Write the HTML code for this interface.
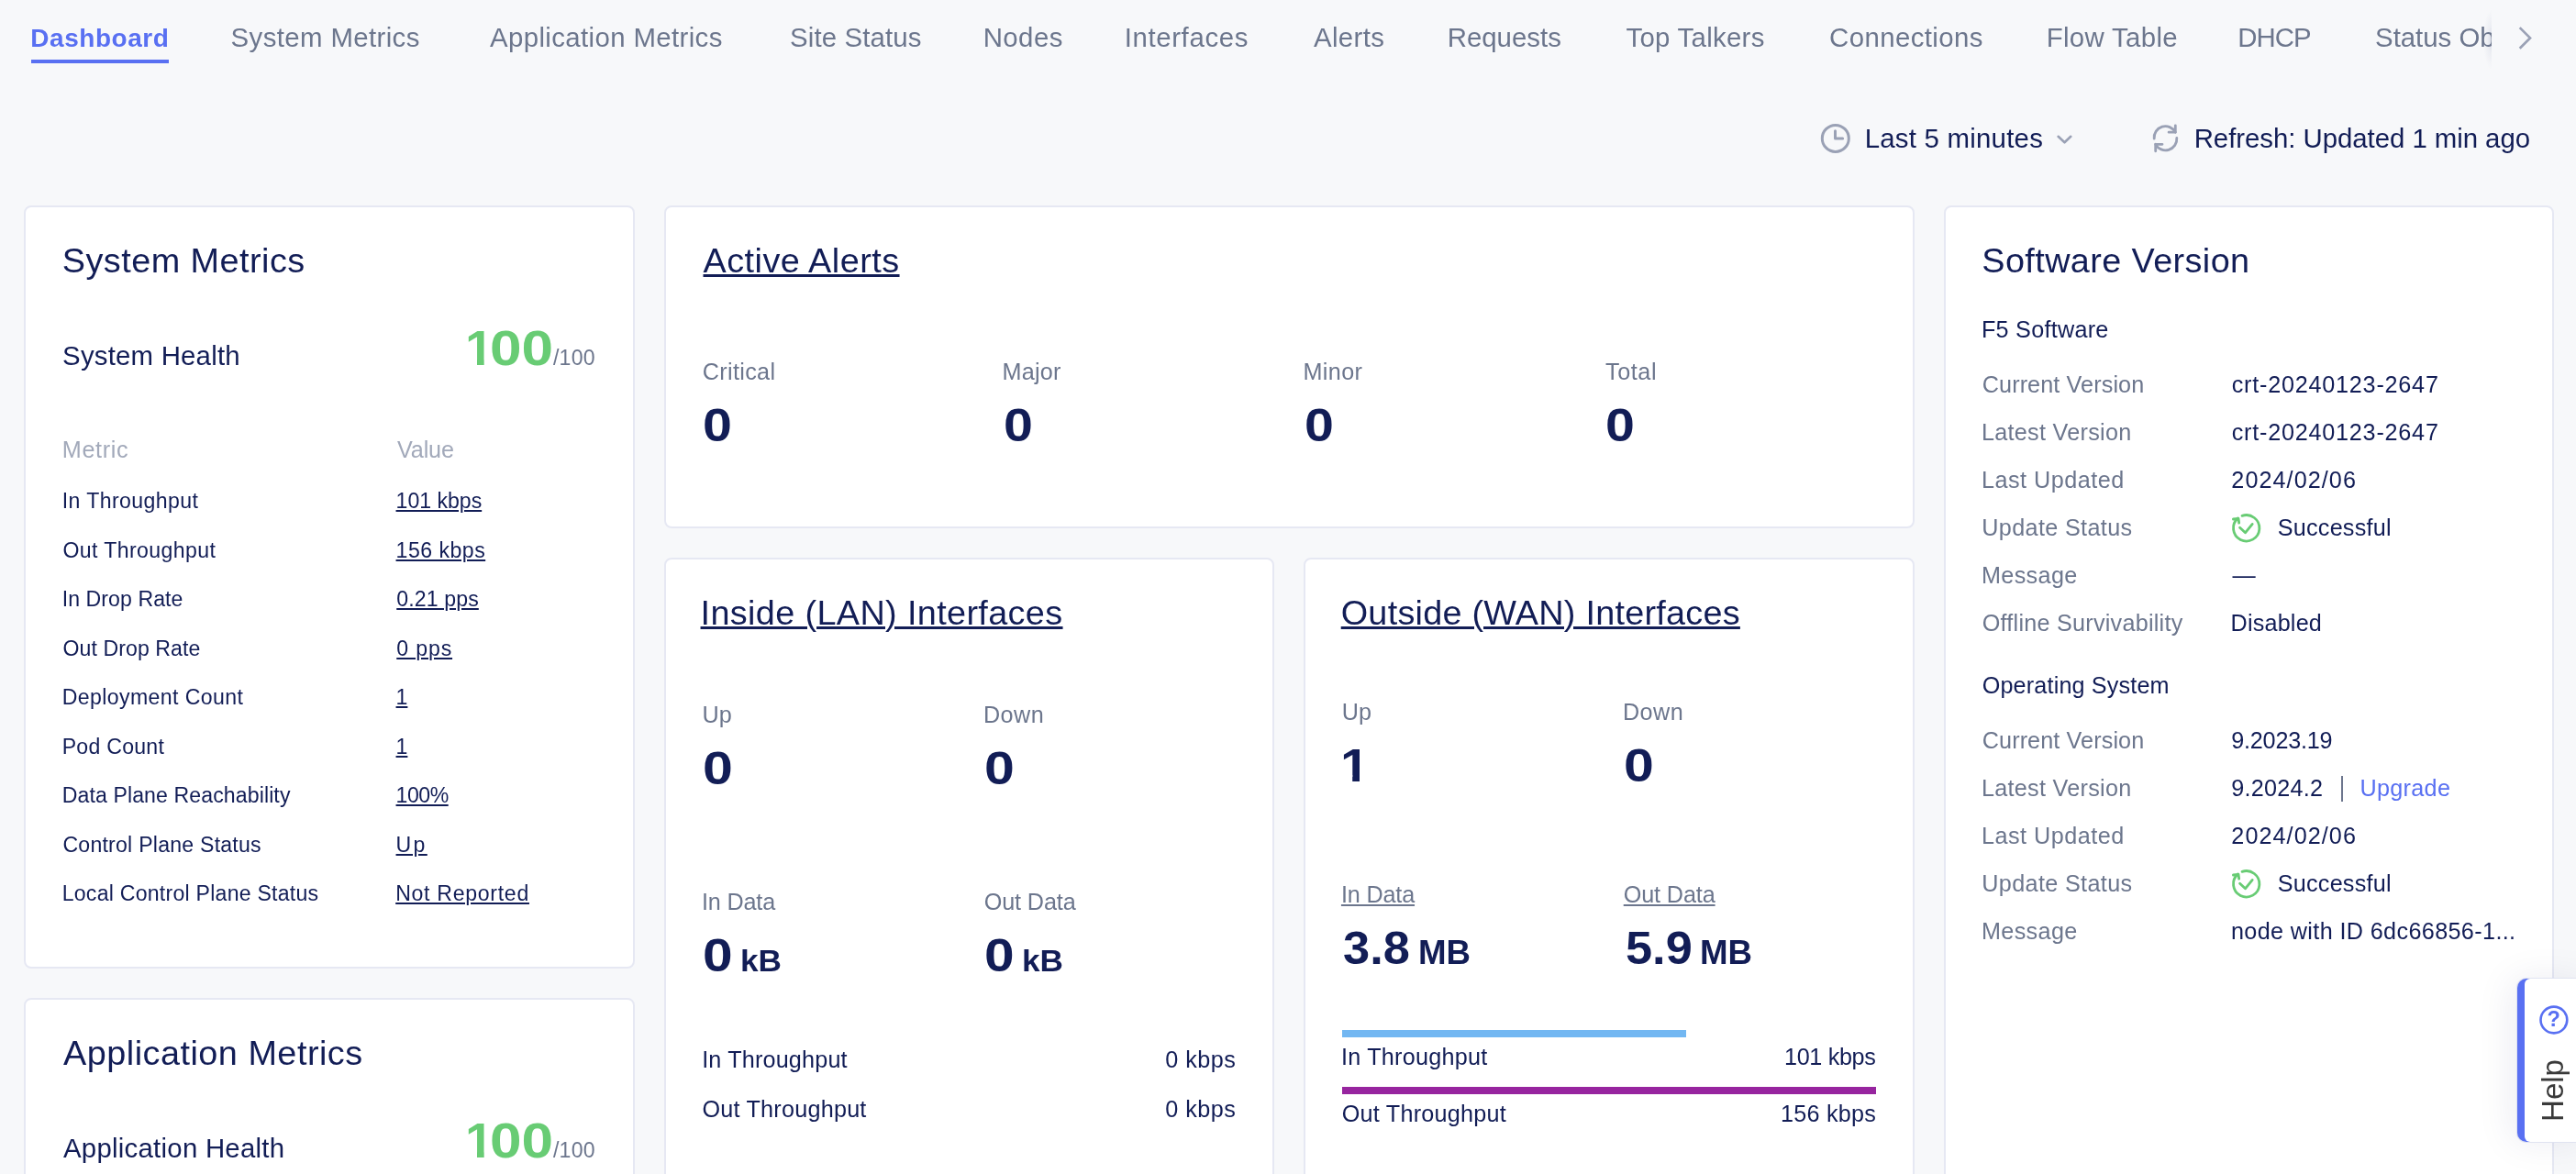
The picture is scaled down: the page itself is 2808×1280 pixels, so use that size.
<!DOCTYPE html>
<html lang="en">
<head>
<meta charset="utf-8">
<title>Dashboard</title>
<style>
html,body{margin:0;padding:0;}
body{width:2808px;height:1280px;overflow:hidden;position:relative;background:#f7f8fa;font-family:"Liberation Sans",sans-serif;color:#121d56;}
.card{position:absolute;box-sizing:border-box;background:#fff;border:2px solid #e6e8f3;border-radius:8px;}
.t{position:absolute;white-space:nowrap;line-height:1;}
.u{text-decoration:underline;text-decoration-thickness:2px;text-underline-offset:2px;}
.u3{text-decoration-thickness:3px;}
.bar{position:absolute;height:8px;}
svg{position:absolute;overflow:visible;}
</style>
</head>
<body>
<!-- cards -->
<div class="card" style="left:26px;top:224px;width:666px;height:832px;"></div>
<div class="card" style="left:26px;top:1088px;width:666px;height:300px;"></div>
<div class="card" style="left:724px;top:224px;width:1363px;height:352px;"></div>
<div class="card" style="left:724px;top:608px;width:665px;height:760px;"></div>
<div class="card" style="left:1421px;top:608px;width:666px;height:760px;"></div>
<div class="card" style="left:2119px;top:224px;width:665px;height:1200px;"></div>

<!-- active tab underline -->
<div style="position:absolute;left:34px;top:65px;width:150px;height:4px;background:#5970f2;"></div>
<div style="position:absolute;left:2707px;top:10px;width:9px;height:66px;background:radial-gradient(ellipse 100% 50% at 100% 50%,rgba(170,176,200,.42) 0%,rgba(170,176,200,.14) 45%,rgba(170,176,200,0) 100%);"></div>
<svg style="left:2740px;top:24px;" width="28" height="36" viewBox="0 0 28 36"><path d="M6.7 6.1 L18 17.4 L6.7 28.8" fill="none" stroke="#9aa1b5" stroke-width="2.7" stroke-linecap="butt" stroke-linejoin="miter"/></svg>

<!-- clock icon -->
<svg style="left:1984px;top:134px;" width="34" height="34" viewBox="0 0 34 34"><circle cx="16.8" cy="16.9" r="14.5" fill="none" stroke="#9aa1b5" stroke-width="3"/><path d="M16.5 8.8 V16.9 H24.6" fill="none" stroke="#9aa1b5" stroke-width="3" stroke-linecap="round" stroke-linejoin="round"/></svg>
<!-- chevron -->
<svg style="left:2241px;top:145px;" width="20" height="14" viewBox="0 0 20 14"><path d="M2.6 3.8 L9.5 10.3 L16.3 3.8" fill="none" stroke="#9aa1b5" stroke-width="2.6" stroke-linecap="round" stroke-linejoin="round"/></svg>
<!-- refresh icon -->
<svg style="left:2345px;top:133px;" width="32" height="36" viewBox="0 0 32 36">
 <g fill="none" stroke="#9aa1b5" stroke-width="2.8" stroke-linecap="round" stroke-linejoin="round">
  <path d="M3.2 18.2 A12.3 12.3 0 0 1 26.3 11.2"/><path d="M26.3 3.8 V11.2 H19.1"/>
  <path d="M27.8 17.4 A12.3 12.3 0 0 1 4.7 24.3"/><path d="M4.7 31.8 V24.3 H12"/>
 </g></svg>

<!-- status icons -->
<svg style="left:2432px;top:559px;" width="34" height="34" viewBox="0 0 34 34"><g fill="none" stroke="#68cc74" stroke-width="2.8" stroke-linecap="round" stroke-linejoin="round"><path d="M12 3.4 A14.2 14.2 0 1 1 7.6 5.9"/><path d="M2.4 7 L8 6.3 L8.7 11.2"/><path d="M9.6 16.2 L15.5 21.8 L23.2 12.4"/></g></svg>
<svg style="left:2432px;top:947px;" width="34" height="34" viewBox="0 0 34 34"><g fill="none" stroke="#68cc74" stroke-width="2.8" stroke-linecap="round" stroke-linejoin="round"><path d="M12 3.4 A14.2 14.2 0 1 1 7.6 5.9"/><path d="M2.4 7 L8 6.3 L8.7 11.2"/><path d="M9.6 16.2 L15.5 21.8 L23.2 12.4"/></g></svg>
<!-- separator before Upgrade -->
<div style="position:absolute;left:2552px;top:846px;width:2px;height:28px;background:#6c768d;"></div>

<!-- throughput bars -->
<div class="bar" style="left:1463px;top:1123px;width:375px;background:#72b7f2;"></div>
<div class="bar" style="left:1463px;top:1185px;width:582px;background:#97259f;"></div>

<!-- help tab -->
<div style="position:absolute;left:2743.5px;top:1066.5px;width:80px;height:178.5px;background:#5970f2;border-radius:10px 0 0 10px;box-shadow:0 0 0 1px rgba(222,225,240,.9),-6px 0 40px rgba(15,30,87,.08);"><div style="position:absolute;left:8.5px;top:0;right:0;bottom:0;background:#fff;border-radius:6px 0 0 6px;"></div></div>
<svg style="left:2767px;top:1095px;" width="34" height="34" viewBox="0 0 34 34"><circle cx="16.9" cy="17" r="14.4" fill="none" stroke="#5970f2" stroke-width="2.6"/></svg>

<div id="txt" style="position:absolute;left:0;top:0;width:2808px;height:1280px;will-change:transform;">
<span class="t" style="top:28.00px;font-size:28.0px;left:33.35px;letter-spacing:0.537px;font-weight:700;color:#5970f2;">Dashboard</span>
<span class="t" style="top:26.00px;font-size:29.4px;left:251.58px;letter-spacing:0.378px;color:#6c768d;">System Metrics</span>
<span class="t" style="top:26.00px;font-size:29.4px;left:534.00px;letter-spacing:0.372px;color:#6c768d;">Application Metrics</span>
<span class="t" style="top:26.00px;font-size:29.4px;left:861.08px;letter-spacing:0.116px;color:#6c768d;">Site Status</span>
<span class="t" style="top:26.00px;font-size:29.4px;left:1071.70px;letter-spacing:0.433px;color:#6c768d;">Nodes</span>
<span class="t" style="top:26.00px;font-size:29.4px;left:1225.70px;letter-spacing:0.624px;color:#6c768d;">Interfaces</span>
<span class="t" style="top:26.00px;font-size:29.4px;left:1432.00px;letter-spacing:0.354px;color:#6c768d;">Alerts</span>
<span class="t" style="top:26.00px;font-size:29.4px;left:1577.70px;color:#6c768d;">Requests</span>
<span class="t" style="top:26.00px;font-size:29.4px;left:1772.54px;letter-spacing:0.268px;color:#6c768d;">Top Talkers</span>
<span class="t" style="top:26.00px;font-size:29.4px;left:1994.12px;letter-spacing:0.386px;color:#6c768d;">Connections</span>
<span class="t" style="top:26.00px;font-size:29.4px;left:2230.70px;letter-spacing:0.329px;color:#6c768d;">Flow Table</span>
<span class="t" style="top:26.00px;font-size:29.4px;left:2439.20px;letter-spacing:-0.924px;color:#6c768d;">DHCP</span>
<span class="t" style="top:26.00px;font-size:29.4px;left:2589.08px;letter-spacing:-0.027px;color:#6c768d;clip-path:inset(-10px 63.89px -10px 0);">Status Objects</span>
<span class="t" style="top:136.00px;font-size:29.4px;left:2032.70px;letter-spacing:0.232px;">Last 5 minutes</span>
<span class="t" style="top:136.00px;font-size:29.4px;left:2391.70px;letter-spacing:-0.049px;">Refresh: Updated 1 min ago</span>
<span class="t" style="top:266.00px;font-size:37.8px;left:67.82px;letter-spacing:0.464px;">System Metrics</span>
<span class="t" style="top:373.00px;font-size:29.4px;left:68.08px;letter-spacing:0.200px;">System Health</span>
<span class="t" style="top:353.01px;font-size:53.0px;left:506.92px;font-weight:700;color:#68cc74;clip-path:polygon(0 0,.369em 0,.369em 1em,.232em 1em,.232em .7em,0 .7em);transform:scaleX(1.0566);transform-origin:0 0;">1</span>
<span class="t" style="top:353.01px;font-size:53.0px;left:533.56px;font-weight:700;color:#68cc74;transform:scaleX(1.1732);transform-origin:0 0;">00</span>
<span class="t" style="top:379.01px;font-size:23.1px;left:603.00px;letter-spacing:0.205px;color:#6c768d;">/100</span>
<span class="t" style="top:478.01px;font-size:25.2px;left:67.83px;letter-spacing:0.653px;color:#a2a9ba;">Metric</span>
<span class="t" style="top:478.01px;font-size:25.2px;left:433.00px;letter-spacing:-0.140px;color:#a2a9ba;">Value</span>
<span class="t" style="top:535.01px;font-size:23.1px;left:67.70px;letter-spacing:0.408px;">In Throughput</span>
<span class="t u" style="top:535.01px;font-size:23.1px;left:431.56px;letter-spacing:-0.013px;">101 kbps</span>
<span class="t" style="top:589.01px;font-size:23.1px;left:68.42px;letter-spacing:0.400px;">Out Throughput</span>
<span class="t u" style="top:589.01px;font-size:23.1px;left:431.56px;letter-spacing:0.487px;">156 kbps</span>
<span class="t" style="top:642.01px;font-size:23.1px;left:67.70px;letter-spacing:0.071px;">In Drop Rate</span>
<span class="t u" style="top:642.01px;font-size:23.1px;left:432.28px;letter-spacing:0.117px;">0.21 pps</span>
<span class="t" style="top:696.01px;font-size:23.1px;left:68.42px;letter-spacing:0.091px;">Out Drop Rate</span>
<span class="t u" style="top:696.01px;font-size:23.1px;left:432.28px;letter-spacing:0.859px;">0 pps</span>
<span class="t" style="top:749.01px;font-size:23.1px;left:67.70px;letter-spacing:0.394px;">Deployment Count</span>
<span class="t u" style="top:749.01px;font-size:23.1px;left:431.56px;">1</span>
<span class="t" style="top:803.01px;font-size:23.1px;left:67.70px;letter-spacing:0.258px;">Pod Count</span>
<span class="t u" style="top:803.01px;font-size:23.1px;left:431.56px;">1</span>
<span class="t" style="top:856.01px;font-size:23.1px;left:67.70px;letter-spacing:0.103px;">Data Plane Reachability</span>
<span class="t u" style="top:856.01px;font-size:23.1px;left:431.56px;letter-spacing:-0.483px;">100%</span>
<span class="t" style="top:910.01px;font-size:23.1px;left:68.42px;letter-spacing:0.233px;">Control Plane Status</span>
<span class="t u" style="top:910.01px;font-size:23.1px;left:431.56px;letter-spacing:2.351px;">Up</span>
<span class="t" style="top:963.01px;font-size:23.1px;left:67.70px;letter-spacing:0.241px;">Local Control Plane Status</span>
<span class="t u" style="top:963.01px;font-size:23.1px;left:431.20px;letter-spacing:0.701px;">Not Reported</span>
<span class="t" style="top:1130.00px;font-size:37.8px;left:69.00px;letter-spacing:0.498px;">Application Metrics</span>
<span class="t" style="top:1237.00px;font-size:29.4px;left:69.00px;letter-spacing:0.245px;">Application Health</span>
<span class="t" style="top:1217.01px;font-size:53.0px;left:506.92px;font-weight:700;color:#68cc74;clip-path:polygon(0 0,.369em 0,.369em 1em,.232em 1em,.232em .7em,0 .7em);transform:scaleX(1.0566);transform-origin:0 0;">1</span>
<span class="t" style="top:1217.01px;font-size:53.0px;left:533.56px;font-weight:700;color:#68cc74;transform:scaleX(1.1732);transform-origin:0 0;">00</span>
<span class="t" style="top:1243.01px;font-size:23.1px;left:603.00px;letter-spacing:0.205px;color:#6c768d;">/100</span>
<span class="t u u3" style="top:266.00px;font-size:37.8px;left:766.50px;letter-spacing:0.468px;">Active Alerts</span>
<span class="t" style="top:393.01px;font-size:25.2px;left:765.72px;letter-spacing:0.334px;color:#6c768d;">Critical</span>
<span class="t" style="top:439.00px;font-size:50.0px;left:766.41px;font-weight:700;transform:scaleX(1.1479);transform-origin:0 0;">0</span>
<span class="t" style="top:393.01px;font-size:25.2px;left:1092.43px;letter-spacing:0.270px;color:#6c768d;">Major</span>
<span class="t" style="top:439.00px;font-size:50.0px;left:1093.91px;font-weight:700;transform:scaleX(1.1479);transform-origin:0 0;">0</span>
<span class="t" style="top:393.01px;font-size:25.2px;left:1420.43px;letter-spacing:0.395px;color:#6c768d;">Minor</span>
<span class="t" style="top:439.00px;font-size:50.0px;left:1421.91px;font-weight:700;transform:scaleX(1.1479);transform-origin:0 0;">0</span>
<span class="t" style="top:393.01px;font-size:25.2px;left:1750.01px;letter-spacing:0.581px;color:#6c768d;">Total</span>
<span class="t" style="top:439.00px;font-size:50.0px;left:1749.91px;font-weight:700;transform:scaleX(1.1479);transform-origin:0 0;">0</span>
<span class="t u u3" style="top:650.00px;font-size:37.8px;left:763.55px;letter-spacing:0.367px;">Inside (LAN) Interfaces</span>
<span class="t" style="top:767.01px;font-size:25.2px;left:765.52px;letter-spacing:-0.017px;color:#6c768d;">Up</span>
<span class="t" style="top:767.01px;font-size:25.2px;left:1071.93px;letter-spacing:0.485px;color:#6c768d;">Down</span>
<span class="t" style="top:813.02px;font-size:50.0px;left:765.95px;font-weight:700;transform:scaleX(1.1809);transform-origin:0 0;">0</span>
<span class="t" style="top:813.02px;font-size:50.0px;left:1072.95px;font-weight:700;transform:scaleX(1.1809);transform-origin:0 0;">0</span>
<span class="t" style="top:971.01px;font-size:25.2px;left:764.93px;letter-spacing:-0.157px;color:#6c768d;">In Data</span>
<span class="t" style="top:971.01px;font-size:25.2px;left:1072.72px;letter-spacing:-0.118px;color:#6c768d;">Out Data</span>
<span class="t" style="top:1017.02px;font-size:50.0px;left:765.97px;font-weight:700;transform:scaleX(1.1726);transform-origin:0 0;">0</span>
<span class="t" style="top:1030.00px;font-size:34.0px;left:806.70px;font-weight:700;transform:scaleX(1.0359);transform-origin:0 0;">kB</span>
<span class="t" style="top:1017.02px;font-size:50.0px;left:1072.97px;font-weight:700;transform:scaleX(1.1726);transform-origin:0 0;">0</span>
<span class="t" style="top:1030.00px;font-size:34.0px;left:1113.70px;font-weight:700;transform:scaleX(1.0359);transform-origin:0 0;">kB</span>
<span class="t" style="top:1143.01px;font-size:25.2px;left:765.13px;letter-spacing:0.173px;">In Throughput</span>
<span class="t" style="top:1197.01px;font-size:25.2px;left:765.42px;letter-spacing:0.230px;">Out Throughput</span>
<span class="t" style="top:1143.01px;font-size:25.2px;right:1460.75px;letter-spacing:0.466px;">0 kbps</span>
<span class="t" style="top:1197.01px;font-size:25.2px;right:1460.75px;letter-spacing:0.466px;">0 kbps</span>
<span class="t u u3" style="top:650.00px;font-size:37.8px;left:1461.73px;letter-spacing:0.249px;">Outside (WAN) Interfaces</span>
<span class="t" style="top:764.01px;font-size:25.2px;left:1462.82px;letter-spacing:-0.017px;color:#6c768d;">Up</span>
<span class="t" style="top:764.01px;font-size:25.2px;left:1768.93px;letter-spacing:0.485px;color:#6c768d;">Down</span>
<span class="t" style="top:810.02px;font-size:50.0px;left:1460.95px;font-weight:700;clip-path:polygon(0 0,.369em 0,.369em 1em,.232em 1em,.232em .7em,0 .7em);transform:scaleX(1.1400);transform-origin:0 0;">1</span>
<span class="t" style="top:810.02px;font-size:50.0px;left:1769.95px;font-weight:700;transform:scaleX(1.1809);transform-origin:0 0;">0</span>
<span class="t u" style="top:963.01px;font-size:25.2px;left:1461.93px;letter-spacing:-0.157px;color:#6c768d;">In Data</span>
<span class="t u" style="top:963.01px;font-size:25.2px;left:1769.72px;letter-spacing:-0.118px;color:#6c768d;">Out Data</span>
<span class="t" style="top:1009.02px;font-size:50.0px;left:1464.18px;font-weight:700;transform:scaleX(1.0477);transform-origin:0 0;">3.8</span>
<span class="t" style="top:1021.01px;font-size:36.0px;left:1545.71px;font-weight:700;transform:scaleX(1.0193);transform-origin:0 0;">MB</span>
<span class="t" style="top:1009.02px;font-size:50.0px;left:1771.78px;font-weight:700;transform:scaleX(1.0462);transform-origin:0 0;">5.9</span>
<span class="t" style="top:1021.01px;font-size:36.0px;left:1853.01px;font-weight:700;transform:scaleX(1.0193);transform-origin:0 0;">MB</span>
<span class="t" style="top:1140.01px;font-size:25.2px;left:1461.93px;letter-spacing:0.248px;">In Throughput</span>
<span class="t" style="top:1202.01px;font-size:25.2px;left:1462.72px;letter-spacing:0.237px;">Out Throughput</span>
<span class="t" style="top:1140.01px;font-size:25.2px;right:763.56px;letter-spacing:-0.345px;">101 kbps</span>
<span class="t" style="top:1202.01px;font-size:25.2px;right:762.99px;letter-spacing:0.227px;">156 kbps</span>
<span class="t" style="top:266.00px;font-size:37.8px;left:2160.32px;letter-spacing:0.403px;">Software Version</span>
<span class="t" style="top:347.01px;font-size:25.2px;left:2159.93px;letter-spacing:0.263px;">F5 Software</span>
<span class="t" style="top:407.01px;font-size:25.2px;left:2160.72px;letter-spacing:0.108px;color:#6c768d;">Current Version</span>
<span class="t" style="top:407.01px;font-size:25.2px;left:2432.71px;letter-spacing:0.772px;">crt-20240123-2647</span>
<span class="t" style="top:459.01px;font-size:25.2px;left:2159.93px;letter-spacing:0.283px;color:#6c768d;">Latest Version</span>
<span class="t" style="top:459.01px;font-size:25.2px;left:2432.71px;letter-spacing:0.772px;">crt-20240123-2647</span>
<span class="t" style="top:511.01px;font-size:25.2px;left:2159.93px;letter-spacing:0.498px;color:#6c768d;">Last Updated</span>
<span class="t" style="top:511.01px;font-size:25.2px;left:2432.32px;letter-spacing:1.064px;">2024/02/06</span>
<span class="t" style="top:563.01px;font-size:25.2px;left:2160.32px;letter-spacing:0.347px;color:#6c768d;">Update Status</span>
<span class="t" style="top:563.01px;font-size:25.2px;left:2482.71px;letter-spacing:0.233px;">Successful</span>
<span class="t" style="top:615.01px;font-size:25.2px;left:2159.93px;letter-spacing:0.373px;color:#6c768d;">Message</span>
<span class="t" style="top:615.01px;font-size:25.2px;left:2433.50px;">—</span>
<span class="t" style="top:667.01px;font-size:25.2px;left:2160.72px;letter-spacing:0.243px;color:#6c768d;">Offline Survivability</span>
<span class="t" style="top:667.01px;font-size:25.2px;left:2431.53px;letter-spacing:0.190px;">Disabled</span>
<span class="t" style="top:735.01px;font-size:25.2px;left:2160.72px;letter-spacing:0.153px;">Operating System</span>
<span class="t" style="top:795.01px;font-size:25.2px;left:2160.72px;letter-spacing:0.108px;color:#6c768d;">Current Version</span>
<span class="t" style="top:795.01px;font-size:25.2px;left:2432.32px;letter-spacing:-0.238px;">9.2023.19</span>
<span class="t" style="top:847.01px;font-size:25.2px;left:2159.93px;letter-spacing:0.283px;color:#6c768d;">Latest Version</span>
<span class="t" style="top:847.01px;font-size:25.2px;left:2432.32px;letter-spacing:0.230px;">9.2024.2</span>
<span class="t" style="top:847.01px;font-size:25.2px;left:2572.42px;letter-spacing:0.322px;color:#5970f2;">Upgrade</span>
<span class="t" style="top:899.01px;font-size:25.2px;left:2159.93px;letter-spacing:0.498px;color:#6c768d;">Last Updated</span>
<span class="t" style="top:899.01px;font-size:25.2px;left:2432.32px;letter-spacing:1.064px;">2024/02/06</span>
<span class="t" style="top:951.01px;font-size:25.2px;left:2160.32px;letter-spacing:0.347px;color:#6c768d;">Update Status</span>
<span class="t" style="top:951.01px;font-size:25.2px;left:2482.71px;letter-spacing:0.233px;">Successful</span>
<span class="t" style="top:1003.01px;font-size:25.2px;left:2159.93px;letter-spacing:0.373px;color:#6c768d;">Message</span>
<span class="t" style="top:1003.01px;font-size:25.2px;left:2431.92px;letter-spacing:0.366px;">node with ID 6dc66856-1...</span>
<span class="t" style="left:2783.8px;top:1111.8px;font-size:23.5px;font-weight:700;color:#5970f2;transform:translate(-50%,-50%);">?</span>
<span class="t" style="left:2782.2px;top:1188.5px;font-size:33px;color:#3a3a3a;transform:translate(-50%,-50%) rotate(-90deg);">Help</span>
</div>
</body>
</html>
